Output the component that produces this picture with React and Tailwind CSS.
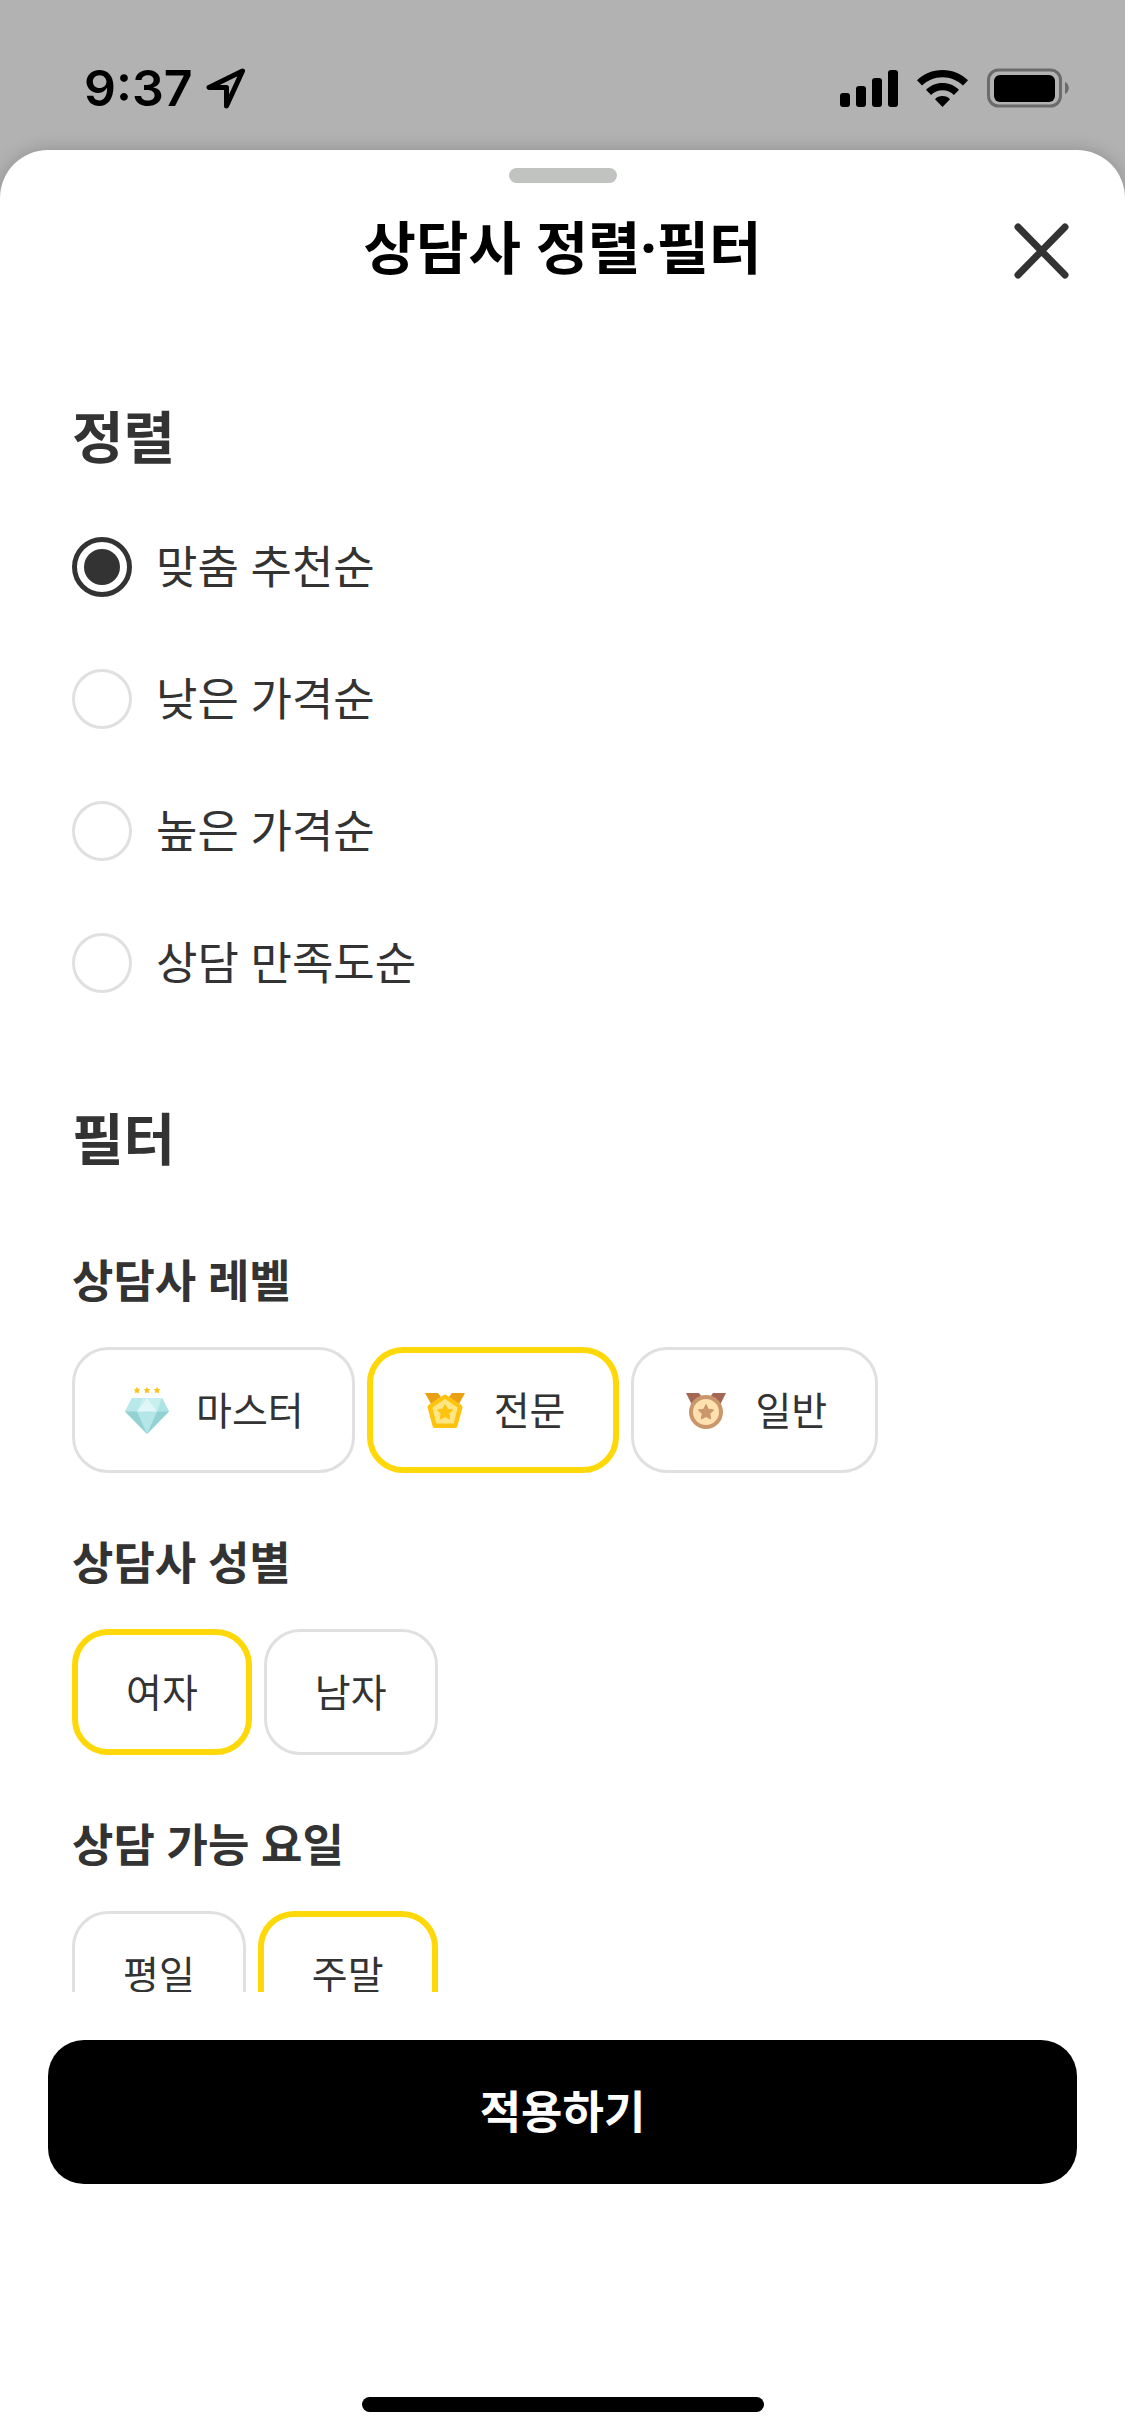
import React, { useState } from 'react';

const SORT_OPTIONS = ['맞춤 추천순', '낮은 가격순', '높은 가격순', '상담 만족도순'];

const STAR = 'M0 -8L2.4 -3.2L7.6 -2.5L3.8 1.2L4.7 6.5L0 4L-4.7 6.5L-3.8 1.2L-7.6 -2.5L-2.4 -3.2Z';

const DiamondIcon = () => (
  <svg className="size-12" viewBox="0 0 48 48" aria-hidden="true">
    <g fill="#fbc31c" stroke="#fbc31c" strokeWidth="2" strokeLinejoin="round">
      <path d={STAR} transform="translate(14 4.5) scale(0.36)" />
      <path d={STAR} transform="translate(24 4.5) scale(0.36)" />
      <path d={STAR} transform="translate(34 4.5) scale(0.36)" />
    </g>
    <path d="M9 12H39L46 25.500L24 48L2 25.500Z" fill="#b5e6e8" />
    <path d="M9 12H19.500L14 25.500H2Z" fill="#b9e8ea" />
    <path d="M19.500 12H39L34 25.500L24 12L14 25.500Z" fill="#c8eff0" />
    <path d="M39 12L46 25.500H34Z" fill="#aee3e5" />
    <path d="M24 12L34 25.500H14Z" fill="#e0f7f7" />
    <path d="M2 25.500H14L24 48Z" fill="#93d1d3" />
    <path d="M46 25.500H34L24 48Z" fill="#93d1d3" />
  </svg>
);

const GoldMedalIcon = () => (
  <svg className="size-12" viewBox="0 0 48 48" aria-hidden="true">
    <path d="M4 7H17L20 11L10 18Z" fill="#eaa014" />
    <path d="M44 7H31L28 11L38 18Z" fill="#eaa014" />
    <path d="M24 11L39 21L34 39.500H14L9 21Z" fill="#fec30d" stroke="#fec30d" strokeWidth="5" strokeLinejoin="round" />
    <path d="M24 14L35.500 22L32 36.500H16L12.500 22Z" fill="#ffe684" stroke="#ffe684" strokeWidth="2" strokeLinejoin="round" />
    <path d={STAR} transform="translate(24 26.500)" fill="#fec30d" stroke="#fec30d" strokeLinejoin="round" />
  </svg>
);

const BronzeMedalIcon = () => (
  <svg className="size-12" viewBox="0 0 48 48" aria-hidden="true">
    <path d="M4 7H17L20 11L9.500 18Z" fill="#a46754" />
    <path d="M44 7H31L28 11L38.500 18Z" fill="#a46754" />
    <circle cx="24" cy="26" r="15" fill="#ffe0af" stroke="#c9976b" strokeWidth="4" />
    <path d={STAR} transform="translate(24 26.500)" fill="#c9976b" stroke="#c9976b" strokeLinejoin="round" />
  </svg>
);

const FILTER_GROUPS = [
  {
    id: 'level',
    title: '상담사 레벨',
    options: [
      { label: '마스터', icon: <DiamondIcon /> },
      { label: '전문', icon: <GoldMedalIcon /> },
      { label: '일반', icon: <BronzeMedalIcon /> },
    ],
  },
  { id: 'gender', title: '상담사 성별', options: [{ label: '여자' }, { label: '남자' }] },
  { id: 'day', title: '상담 가능 요일', options: [{ label: '평일' }, { label: '주말' }] },
];

const StatusBar = () => (
  <div className="flex h-[150px] shrink-0 items-center justify-between pt-[26px] pr-[55px] pl-[84px]">
    <div className="flex items-center gap-3">
      <span className="font-['Inter',sans-serif] text-[50px] leading-[62px] font-semibold text-black">9:37</span>
      <svg className="h-[42px] w-[42px]" viewBox="0 0 42 42" fill="none" aria-hidden="true">
        <path d="M37.500 4L4 20.500H21.500V39Z" stroke="#000" strokeWidth="5" strokeLinejoin="round" />
      </svg>
    </div>
    <div className="flex items-center gap-[19px]">
      <svg className="h-10 w-[58px]" viewBox="0 0 58 40" aria-hidden="true">
        <rect x="0" y="25" width="10" height="14" rx="3" />
        <rect x="16" y="18" width="10" height="21" rx="3" />
        <rect x="32" y="10" width="10" height="29" rx="3" />
        <rect x="48" y="2" width="10" height="37" rx="3" />
      </svg>
      <svg className="h-10 w-[51px]" viewBox="0 0 51 40" aria-hidden="true">
        <path d="M25.500 2C35.500 2 44.500 6 51 12.300L46 17.500C40.600 12.500 33.500 9.300 25.500 9.300S10.400 12.500 5 17.500L0 12.300C6.500 6 15.500 2 25.500 2Z" />
        <path d="M25.500 15C31.900 15 37.700 17.500 42 21.700L37 27C34 24.200 30 22.300 25.500 22.300S17 24.200 14 27L9 21.700C13.300 17.500 19.100 15 25.500 15Z" />
        <path d="M25.500 28C28.500 28 31.200 29.200 33 31.200L25.500 39L18 31.200C19.800 29.200 22.500 28 25.500 28Z" />
      </svg>
      <svg className="h-10 w-[83px]" viewBox="0 0 83 40" aria-hidden="true">
        <rect x="1.500" y="2" width="72" height="36" rx="10" fill="none" stroke="#6b6b6b" strokeWidth="3" />
        <rect x="7" y="7" width="61" height="27" rx="6" />
        <path d="M78 14C83 16 83 24 78 26Z" fill="#6b6b6b" />
      </svg>
    </div>
  </div>
);

const Chip = ({ label, icon, checked, onChange }) => (
  <label
    className={`flex h-[126px] cursor-pointer items-center gap-[25px] rounded-[36px] px-12 text-[39px] leading-[60px] text-[#333] ${
      checked ? 'border-6 border-[#fed808]' : 'border-3 border-[#e0e0e0]'
    }`}
  >
    <input type="checkbox" checked={checked} onChange={onChange} className="sr-only" />
    {icon}
    <span>{label}</span>
  </label>
);

const App = () => {
  const [sort, setSort] = useState(SORT_OPTIONS[0]);
  const [selected, setSelected] = useState(['전문', '여자', '주말']);

  const toggle = (label) => {
    setSelected((prev) => (prev.includes(label) ? prev.filter((item) => item !== label) : [...prev, label]));
  };

  return (
    <div className="flex h-screen flex-col bg-[#b2b2b2] font-['Noto_Sans','Noto_Sans_CJK_KR',sans-serif] text-[#333]">
      <StatusBar />

      <div className="flex min-h-0 flex-1 flex-col rounded-t-[48px] bg-white pt-[18px] shadow-[0_0_18px_rgba(0,0,0,0.2)]">
        <div className="mx-auto h-[15px] w-[108px] shrink-0 rounded-full bg-[#c1c3c1]" />

        <header className="grid shrink-0 grid-cols-[1fr_auto_1fr] items-center px-12 pt-7">
          <h1 className="col-start-2 text-[57px] leading-[72px] font-bold text-black">상담사 정렬·필터</h1>
          <button type="button" aria-label="닫기" className="justify-self-end">
            <svg className="size-[72px]" viewBox="0 0 72 72" fill="none" aria-hidden="true">
              <path d="M13 16L60 64M60 16L13 64" stroke="#333" strokeWidth="7" strokeLinecap="round" />
            </svg>
          </button>
        </header>

        <main className="min-h-0 flex-1 overflow-y-auto px-[72px] pt-[117px] [scrollbar-width:none]">
          <h2 className="text-[56px] leading-[72px] font-bold">정렬</h2>
          <div role="radiogroup" aria-label="정렬" className="mt-[65px] flex flex-col gap-[72px]">
            {SORT_OPTIONS.map((option) => (
              <label key={option} className="flex cursor-pointer items-center gap-6 text-[45px] leading-[60px]">
                <input
                  type="radio"
                  name="sort"
                  value={option}
                  checked={sort === option}
                  onChange={() => setSort(option)}
                  className="size-[60px] appearance-none rounded-full border-3 border-[#e0e0e0] checked:border-5 checked:border-[#333] checked:bg-[#333] checked:bg-clip-content checked:p-[7px]"
                />
                <span>{option}</span>
              </label>
            ))}
          </div>

          <h2 className="mt-[109px] text-[56px] leading-[72px] font-bold">필터</h2>
          <div className="mt-[77px] flex flex-col gap-[60px]">
            {FILTER_GROUPS.map((group) => (
              <section key={group.id} aria-labelledby={group.id}>
                <h3 id={group.id} className="text-[45px] leading-[60px] font-bold">{group.title}</h3>
                <div className="mt-9 flex flex-wrap gap-3">
                  {group.options.map((option) => (
                    <Chip
                      key={option.label}
                      label={option.label}
                      icon={option.icon}
                      checked={selected.includes(option.label)}
                      onChange={() => toggle(option.label)}
                    />
                  ))}
                </div>
              </section>
            ))}
          </div>
        </main>

        <footer className="flex shrink-0 flex-col items-center px-12 pt-12 pb-6">
          <button type="button" className="h-36 w-full rounded-[36px] bg-black text-[45px] leading-[60px] font-bold text-white">
            적용하기
          </button>
          <div className="mt-[213px] h-[15px] w-[402px] rounded-full bg-black" />
        </footer>
      </div>
    </div>
  );
};

export default App;
